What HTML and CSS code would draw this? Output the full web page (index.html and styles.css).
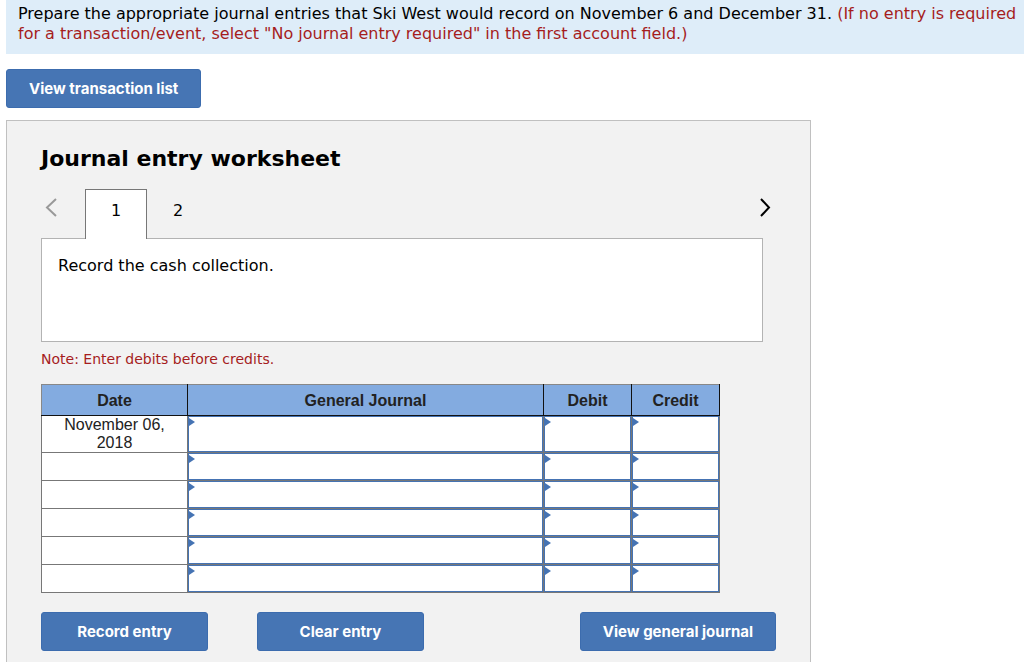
FILE: index.html
```html
<!DOCTYPE html>
<html lang="en">
<head>
    <meta charset="UTF-8">
    <meta name="viewport" content="width=device-width, initial-scale=1.0">
    <title>Journal entry worksheet</title>
    <link rel="stylesheet" href="styles.css">
</head>
<body>
    <p class="instructions">Prepare the appropriate journal entries that Ski West would record on November 6 and December 31. <span class="hint">(If no entry is required for a transaction/event, select "No journal entry required" in the first account field.)</span></p>

    <button type="button" class="btn btn-list">View transaction list</button>

    <main class="worksheet">
        <h1>Journal entry worksheet</h1>

        <div class="tab-row">
            <button type="button" class="arrow arrow-prev" aria-label="Previous">
                <svg width="12" height="20" viewBox="0 0 12 20"><path d="M11 1 L2 9.500 L11 18"/></svg>
            </button>
            <div class="tabs" role="tablist">
                <button type="button" class="tab active" role="tab" aria-selected="true">1</button>
                <button type="button" class="tab" role="tab" aria-selected="false">2</button>
            </div>
            <button type="button" class="arrow arrow-next" aria-label="Next">
                <svg width="12" height="20" viewBox="0 0 12 20"><path d="M1 1 L9 9.500 L1 18"/></svg>
            </button>
        </div>
        <div class="description" role="tabpanel">Record the cash collection.</div>

        <p class="note">Note: Enter debits before credits.</p>

        <table class="journal">
            <thead>
                <tr>
                    <th class="col-date">Date</th>
                    <th class="col-account">General Journal</th>
                    <th class="col-amount">Debit</th>
                    <th class="col-amount">Credit</th>
                </tr>
            </thead>
            <tbody id="journalRows">
                <!-- Rows are inserted here -->
            </tbody>
        </table>

        <div class="actions">
            <button type="button" class="btn">Record entry</button>
            <button type="button" class="btn">Clear entry</button>
            <button type="button" class="btn btn-view">View general journal</button>
        </div>
    </main>

    <script>
        const dates = ["November 06, 2018", "", "", "", "", ""];
        const fields = ["General Journal", "Debit", "Credit"];
        const journalRows = document.getElementById('journalRows');

        dates.forEach((date, i) => {
            const row = document.createElement('tr');
            row.innerHTML = `<td class="date">${date}</td>` + fields.map(field =>
                `<td class="entry"><input type="text" aria-label="${field}, row ${i + 1}"></td>`
            ).join('');
            journalRows.appendChild(row);
        });
    </script>
</body>
</html>
```

FILE: styles.css
```css
* {
    box-sizing: border-box;
}
body {
    display: flex;
    flex-direction: column;
    align-items: flex-start;
    min-height: 100vh;
    margin: 0;
    padding-left: 6px;
    background: #fff;
    color: #000;
    font-family: Verdana, "DejaVu Sans", sans-serif;
    font-size: 16px;
}
.instructions {
    align-self: stretch;
    margin: 0 0 15px;
    padding: 4px 0 10px 12px;
    line-height: 20px;
    background: #deedf9;
}
.hint,
.note {
    color: #a51d1d;
}
.btn {
    min-width: 167px;
    height: 39px;
    padding: 0 22px;
    border: 1px solid #3c6cae;
    border-radius: 3px;
    background: #4675b4;
    color: #fff;
    font-family: Inter, sans-serif;
    font-size: 15px;
    font-weight: 700;
    cursor: pointer;
}
.worksheet {
    flex: 1;
    width: 100%;
    max-width: 805px;
    margin-top: 12px;
    padding: 24px 34px 11px;
    border: 1px solid #c0c0c0;
    border-bottom: none;
    background: #f2f2f2;
}
h1 {
    margin: 0 0 16px;
    font-size: 22px;
    line-height: 28px;
}
.tab-row {
    display: flex;
    align-items: flex-start;
    padding: 0 4px;
}
.arrow {
    height: 38px;
    padding: 0;
    border: none;
    background: none;
    cursor: pointer;
}
.arrow svg {
    display: block;
    fill: none;
    stroke: #000;
    stroke-width: 2;
}
.arrow-prev svg {
    stroke: #999;
}
.tabs {
    display: flex;
    flex: 1;
    margin: 0 28px -1px;
}
.tab {
    width: 62px;
    height: 50px;
    padding: 0 0 8px;
    border: 1px solid transparent;
    border-bottom: none;
    background: none;
    color: #000;
    font: inherit;
    cursor: pointer;
}
.tab.active {
    z-index: 1;
    border-color: #777;
    background: #fff;
}
.description {
    min-height: 104px;
    margin-right: 13px;
    padding: 16px;
    border: 1px solid #b3b3b3;
    background: #fff;
    line-height: 22px;
}
.note {
    margin: 8px 0 16px;
    font-size: 14px;
    line-height: 18px;
}
.journal {
    width: 679px;
    max-width: 100%;
    table-layout: fixed;
    border-collapse: collapse;
    background: #fff;
    color: #222;
    font-family: Arial, "Liberation Sans", sans-serif;
    font-size: 16px;
    line-height: 18px;
}
.col-date {
    width: 146px;
}
.col-amount {
    width: 88px;
}
.journal th {
    height: 31px;
    padding: 2px 0 0;
    border: 1px solid #111;
    border-top-color: #888;
    background: #83abe0;
}
.journal th:first-child {
    border-left-color: #888;
}
.journal td {
    height: 28px;
    padding: 0;
    border: 1px solid #777;
    text-align: center;
}
.journal .date {
    padding: 0 16px;
}
.journal .entry {
    position: relative;
}
.entry input {
    display: block;
    width: 100%;
    height: 100%;
    padding: 0 8px;
    border: 1px solid #4573b3;
    background: #fff;
    font: inherit;
}
.entry::before {
    content: "";
    position: absolute;
    top: 2px;
    left: 1px;
    border: 4px solid transparent;
    border-right: none;
    border-left: 6px solid #4573b3;
}
.actions {
    display: flex;
    gap: 49px;
    margin-top: 19px;
}
.btn-view {
    margin-left: auto;
}
```
